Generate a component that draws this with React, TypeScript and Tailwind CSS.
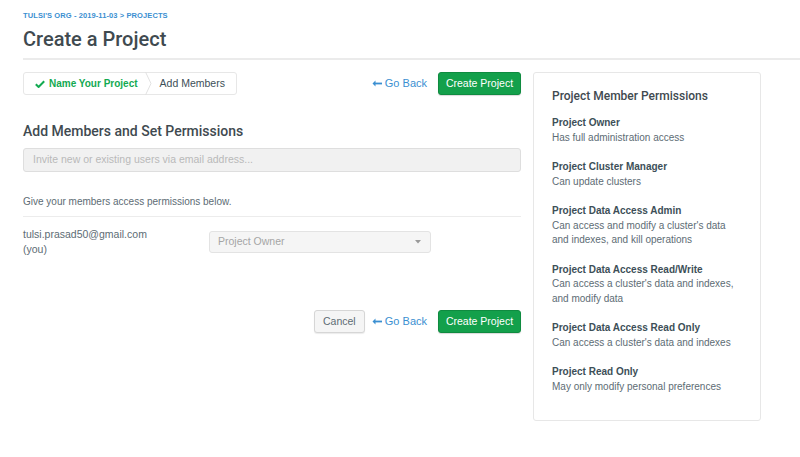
import React from 'react';

const permissions = [
  { title: 'Project Owner', lines: ['Has full administration access'] },
  { title: 'Project Cluster Manager', lines: ['Can update clusters'] },
  {
    title: 'Project Data Access Admin',
    lines: ["Can access and modify a cluster's data", 'and indexes, and kill operations'],
  },
  {
    title: 'Project Data Access Read/Write',
    lines: ["Can access a cluster's data and indexes,", 'and modify data'],
  },
  { title: 'Project Data Access Read Only', lines: ["Can access a cluster's data and indexes"] },
  { title: 'Project Read Only', lines: ['May only modify personal preferences'] },
];

function ArrowLeft() {
  return (
    <svg width="10" height="7" viewBox="0 0 10 7" className="mr-[3px]">
      <path d="M3.5 0.5 L0.5 3.5 L3.5 6.5 Z" fill="#3b8fd1" />
      <rect x="2" y="2.6" width="8" height="1.8" fill="#3b8fd1" />
    </svg>
  );
}

function GoBack() {
  return (
    <a className="flex items-center text-[11px] text-[#3b8fd1] cursor-pointer">
      <ArrowLeft />
      Go Back
    </a>
  );
}

function CreateButton() {
  return (
    <button className="h-[23px] w-[83px] rounded-[3px] bg-[#13a04b] border border-[#0f8b40] text-white text-[10.5px] shadow-[0_1px_1px_rgba(0,0,0,0.15)]">
      Create Project
    </button>
  );
}

export default function App() {
  return (
    <div
      className="min-h-[457px] bg-white text-[#3d4f58]"
      style={{ fontFamily: '"Liberation Sans", Arial, sans-serif' }}
    >
      {/* header */}
      <div className="pl-[23px] pt-[11px]">
        <div className="text-[7.5px] font-bold leading-[9px] text-[#3b8fd1] tracking-[0.1px]">
          TULSI'S ORG - 2019-11-03 &gt; PROJECTS
        </div>
        <h1 className="mt-[7px] text-[20px] leading-[24px] text-[#3f4a50]" style={{ fontFamily: 'Roboto, "Liberation Sans", sans-serif', fontWeight: 500 }}>
          Create a Project
        </h1>
        <div className="mt-[7px] h-[2px] bg-[#ebebeb]" />
      </div>

      <div className="flex pl-[23px] pt-[12px] gap-[12px]">
        {/* main column */}
        <div className="w-[498px]">
          <div className="flex items-center h-[23px]">
            <div className="flex items-stretch h-[23px] border border-[#e7e7e7] rounded-[3px] bg-white">
              <div className="flex items-center pl-[11px] pr-[7px] text-[10px] font-bold text-[#13aa52]">
                <svg width="10" height="8" viewBox="0 0 10 8" className="mr-[4px]">
                  <path d="M0.8 4.2 L3.6 7 L9.2 1.2" stroke="#13aa52" strokeWidth="2" fill="none" />
                </svg>
                Name Your Project
              </div>
              <svg width="7" height="23" viewBox="0 0 7 23" className="-my-px">
                <polyline points="0.5,0 6,11.5 0.5,23" stroke="#e2e2e2" fill="none" />
              </svg>
              <div className="flex items-center pl-[8px] pr-[11px] text-[10.5px] text-[#3d4f58]">Add Members</div>
            </div>
            <div className="flex-1" />
            <GoBack />
            <div className="w-[11px]" />
            <CreateButton />
          </div>

          <h2
            className="mt-[28px] text-[14px] leading-[17px] text-[#3f4a50]"
            style={{ fontFamily: 'Roboto, "Liberation Sans", sans-serif', fontWeight: 500 }}
          >
            Add Members and Set Permissions
          </h2>

          <div className="mt-[8px] h-[24px] rounded-[3px] border border-[#dedede] bg-[#f1f1f1] flex items-center pl-[9px] text-[10.5px] text-[#b9b9b9]">
            Invite new or existing users via email address...
          </div>

          <p className="mt-[23px] text-[10px] leading-[13px] text-[#5d6c74]">Give your members access permissions below.</p>
          <div className="mt-[8px] h-px bg-[#ececec]" />

          <div className="flex mt-[10px]">
            <div className="w-[186px] text-[10.5px] leading-[15px] text-[#5d6c74]">
              tulsi.prasad50@gmail.com
              <br />
              (you)
            </div>
            <div className="mt-[4px] w-[222px] h-[22px] rounded-[3px] border border-[#e3e3e3] bg-[#f5f5f5] flex items-center justify-between pl-[8px] pr-[9px] text-[10.5px] text-[#a5a5a5]">
              Project Owner
              <svg width="6" height="4" viewBox="0 0 6 4">
                <path d="M0 0 L6 0 L3 3.5 Z" fill="#9a9a9a" />
              </svg>
            </div>
          </div>

          <div className="mt-[53px] flex items-center justify-end">
            <button className="h-[23px] w-[51px] rounded-[3px] border border-[#d6d6d6] bg-[#f5f5f5] text-[10.5px] text-[#5d6c74] shadow-[0_1px_1px_rgba(0,0,0,0.08)]">
              Cancel
            </button>
            <div className="w-[7px]" />
            <GoBack />
            <div className="w-[11px]" />
            <CreateButton />
          </div>
        </div>

        {/* permissions panel */}
        <div className="w-[228px] h-[349px] rounded-[3px] border border-[#e7e7e7] pl-[18px] pt-[16px]">
          <h3
            className="text-[12px] leading-[15px] text-[#3f4a50]"
            style={{ fontFamily: 'Roboto, "Liberation Sans", sans-serif', fontWeight: 500 }}
          >
            Project Member Permissions
          </h3>
          <div className="mt-[12px] flex flex-col gap-[15px]">
            {permissions.map(p => (
              <div key={p.title}>
                <div className="text-[10px] leading-[14.5px] font-bold text-[#3d4f58]">{p.title}</div>
                {p.lines.map(l => (
                  <div key={l} className="text-[10px] leading-[14.5px] text-[#5d6c74]">
                    {l}
                  </div>
                ))}
              </div>
            ))}
          </div>
        </div>
      </div>
    </div>
  );
}
